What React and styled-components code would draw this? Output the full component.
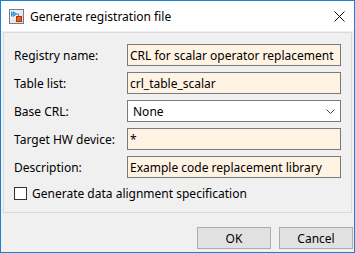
import React from 'react';
import styled, { createGlobalStyle } from 'styled-components';

const GlobalStyle = createGlobalStyle`
  html, body {
    margin: 0;
    padding: 0;
    background: #f0f0f0;
  }
  * {
    box-sizing: border-box;
  }
`;

const fields = [
  { label: 'Registry name:', value: 'CRL for scalar operator replacement' },
  { label: 'Table list:', value: 'crl_table_scalar' },
  { label: 'Base CRL:', value: 'None', select: true },
  { label: 'Target HW device:', value: '*' },
  { label: 'Description:', value: 'Example code replacement library' },
];

const AppIcon = () => (
  <svg width="15" height="15" viewBox="0 0 15 15">
    <defs>
      <linearGradient id="ig" x1="0" y1="0" x2="1" y2="1">
        <stop offset="0" stopColor="#ffffff" />
        <stop offset="1" stopColor="#d6d6d6" />
      </linearGradient>
    </defs>
    <rect x="0.5" y="0.5" width="14" height="14" fill="url(#ig)" stroke="#7a7a7a" />
    <path d="M2.5 2.5 V7.5 M2.5 5 H4 M4 2.5 L7.5 5 L4 7.5 Z" stroke="#2f8fd8" strokeWidth="1" fill="#56b4ee" />
    <path d="M7.5 5 H9.5 V8" stroke="#2f8fd8" strokeWidth="1" fill="none" />
    <rect x="7.5" y="7.5" width="5" height="5" fill="#e8601c" stroke="#a83a10" />
  </svg>
);

const CloseIcon = () => (
  <svg width="11" height="11" viewBox="0 0 11 11">
    <path d="M0.5 0.5 L10.5 10.5 M10.5 0.5 L0.5 10.5" stroke="#111" strokeWidth="1" />
  </svg>
);

const Chevron = () => (
  <svg width="9" height="5" viewBox="0 0 9 5">
    <path d="M0.5 0.5 L4.5 4.5 L8.5 0.5" stroke="#444" strokeWidth="1" fill="none" />
  </svg>
);

const App = () => (
  <>
    <GlobalStyle />
    <Window>
      <TitleBar>
        <IconSlot>
          <AppIcon />
        </IconSlot>
        <Title>Generate registration file</Title>
        <CloseButton>
          <CloseIcon />
        </CloseButton>
      </TitleBar>
      <Panel>
        {fields.map(f => (
          <Row key={f.label}>
            <Label>{f.label}</Label>
            <Field select={f.select}>
              <span>{f.value}</span>
              {f.select && <Chevron />}
            </Field>
          </Row>
        ))}
        <CheckRow>
          <CheckBox />
          <CheckText>Generate data alignment specification</CheckText>
        </CheckRow>
      </Panel>
      <ButtonBar>
        <Button>OK</Button>
        <Button>Cancel</Button>
      </ButtonBar>
    </Window>
  </>
);

const Window = styled.div`
  width: 355px;
  height: 253px;
  border: 1px solid #1c7fd6;
  background: #f0f0f0;
  display: flex;
  flex-direction: column;
  font-family: "Noto Sans", "Liberation Sans", sans-serif;
  font-size: 12px;
  color: #000;
`;

const TitleBar = styled.div`
  height: 30px;
  background: #fff;
  display: flex;
  align-items: center;
  padding: 0 9px 0 8px;
`;

const IconSlot = styled.div`
  width: 15px;
  height: 15px;
  display: flex;
  margin-top: 1px;
`;

const Title = styled.div`
  flex: 1;
  margin-left: 6px;
  font-size: 12px;
`;

const CloseButton = styled.div`
  width: 11px;
  height: 11px;
  display: flex;
  margin-top: 1px;
`;

const Panel = styled.div`
  margin: 1px 2px 0 2px;
  height: 181px;
  border: 1px solid #dadada;
  padding: 11px 10px 0 10px;
  display: flex;
  flex-direction: column;
  gap: 6px;
`;

const Row = styled.div`
  display: flex;
  align-items: center;
  height: 22px;
`;

const Label = styled.div`
  width: 113px;
`;

const Field = styled.div`
  width: 214px;
  height: 22px;
  border: 1px solid #7a7a7a;
  background: ${props => props.select ? '#ffffff' : '#fff3e3'};
  display: flex;
  align-items: center;
  justify-content: space-between;
  padding: 0 5px 0 ${props => props.select ? '5px' : '2px'};
  white-space: nowrap;
  overflow: hidden;
`;

const CheckRow = styled.div`
  display: flex;
  align-items: center;
  height: 13px;
  margin-top: 3px;
`;

const CheckBox = styled.div`
  width: 13px;
  height: 13px;
  border: 1px solid #333;
  background: #fff;
`;

const CheckText = styled.div`
  margin-left: 5px;
`;

const ButtonBar = styled.div`
  display: flex;
  justify-content: flex-end;
  gap: 8px;
  padding: 14px 1px 0 0;
`;

const Button = styled.div`
  width: 74px;
  height: 22px;
  border: 1px solid #adadad;
  background: #e1e1e1;
  display: flex;
  align-items: center;
  justify-content: center;
`;

export default App;
